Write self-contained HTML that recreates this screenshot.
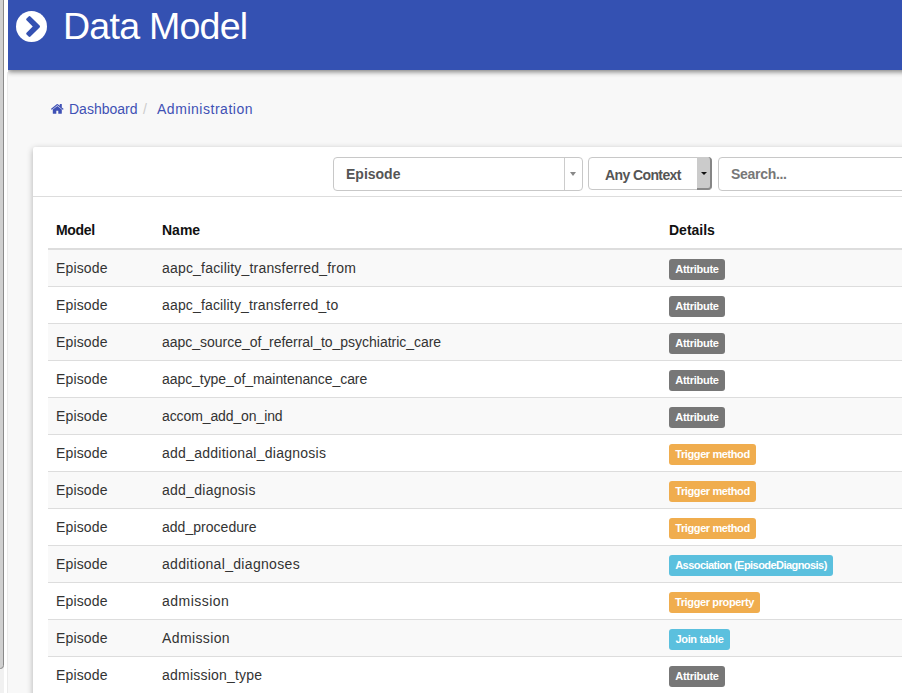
<!DOCTYPE html>
<html><head><meta charset="utf-8">
<style>
*{box-sizing:border-box;margin:0;padding:0}
html,body{width:902px;height:693px;overflow:hidden}
body{background:#f8f8f8;font-family:"Liberation Sans",sans-serif;font-size:14px;color:#333;position:relative}
.sb-thumb{position:absolute;left:-3px;top:-10px;width:7px;height:679px;background:#d0d0d0;border:1px solid #8a8a8a;border-radius:4px}
.sb-track{position:absolute;left:0;top:0;width:4px;height:693px;background:#f1f1f1}
.sb-white{position:absolute;left:4px;top:0;width:4px;height:693px;background:#fff;z-index:5}
.sb-line{position:absolute;left:7px;top:72px;width:1px;height:621px;background:#ebebeb;z-index:6}
.hdr{position:absolute;left:8px;top:0;width:1000px;height:70px;background:#3451b2;box-shadow:0 2px 5px rgba(0,0,0,.48)}
.hdr .circ{position:absolute;left:8px;top:10.7px}
.hdr h1{position:absolute;left:55px;top:4px;font-weight:normal;color:#fff;font-size:37.6px;line-height:44px;letter-spacing:-.78px;white-space:nowrap}
.home{position:absolute;left:51.3px;top:104.2px}
.bc{position:absolute;top:99px;font-size:14px;line-height:20px;color:#3f51b5;white-space:nowrap}
.b1{left:69px}.b2{left:143px;color:#ccc}.b3{left:157px;letter-spacing:.53px}
.panel{position:absolute;left:33px;top:147px;width:900px;height:600px;background:#fff;border-radius:2px;box-shadow:0 2px 6px rgba(0,0,0,.3)}
.ph{position:absolute;left:0;top:0;width:100%;height:50px;border-bottom:1px solid #ddd}
.sel{position:absolute;left:300px;top:10px;width:250px;height:34px;border:1px solid #c8c8c8;border-radius:4px;background:#fff}
.sel .t{position:absolute;left:12px;top:7px;font-weight:bold;color:#555;line-height:18px}
.sel .dv{position:absolute;left:230px;top:0;width:1px;height:32px;background:#ccc}
.sel .ar{position:absolute;left:235.5px;top:13.5px;width:0;height:0;border-left:3px solid transparent;border-right:3px solid transparent;border-top:4.5px solid #888}
.ctx{position:absolute;left:555px;top:10px;width:124px;height:33px;border:1px solid #c8c8c8;border-radius:4px;background:#fff}
.ctx .t{position:absolute;left:16px;top:8px;font-weight:bold;color:#555;line-height:18px;letter-spacing:-.6px}
.ctx .g{position:absolute;right:-1px;top:-1px;width:15px;height:33px;background:#cbcbcb;border-right:2px solid #858585;border-bottom:2px solid #8a8a8a;border-radius:0 4px 4px 0}
.ctx .g:after{content:"";position:absolute;left:3.5px;top:14.5px;border-left:3px solid transparent;border-right:3px solid transparent;border-top:3.5px solid #111}
.srch{position:absolute;left:685px;top:10px;width:300px;height:34px;border:1px solid #c8c8c8;border-radius:4px;background:#fff}
.srch .t{position:absolute;left:12px;top:7px;color:#777;font-weight:bold;line-height:18px;letter-spacing:-.3px}
table{position:absolute;left:15px;top:65px;width:900px;border-collapse:collapse}
th,td{padding:8px;line-height:20px;height:36px;text-align:left;vertical-align:top;white-space:nowrap}
th{font-weight:bold;color:#111;border-bottom:2px solid #ddd}
td{border-top:1px solid #ddd}
tr.o td{background:#f9f9f9}
th.c1,td.c1{width:106px}
td.c1{letter-spacing:.15px}
th.c2,td.c2{width:507px}
.lb{display:inline-block;vertical-align:top;height:21px;padding:0;text-align:center;font-size:11px;font-weight:bold;line-height:21px;color:#fff;border-radius:3px;margin-top:1px;margin-bottom:-2px}
.df{background:#777}.wn{background:#f0ad4e}.in{background:#5bc0de}
.at{width:56px;letter-spacing:-.27px}.tm{width:87px;letter-spacing:-.4px}.as{width:164px;letter-spacing:-.55px}.tp{width:91px;letter-spacing:-.37px}.jt{width:61px;letter-spacing:-.33px}
</style></head><body>
<div class="sb-track"></div>
<div class="sb-thumb"></div>
<div class="hdr">
  <svg class="circ" width="31" height="31" viewBox="0 128 1536 1536"><circle cx="768" cy="896" r="768" fill="#fff"/><path transform="translate(-130,0)" d="M845 1395l454-454q19-19 19-45t-19-45l-454-454q-19-19-45-19t-45 19l-102 102q-19 19-19 45t19 45l307 307-307 307q-19 19-19 45t19 45l102 102q19 19 45 19t45-19z" fill="#3451b2"/></svg>
  <h1>Data Model</h1>
</div>
<svg class="home" width="12.6" height="9.8" viewBox="26 -195 1612 1283" preserveAspectRatio="none"><path fill="#3f51b5" d="M1408 544v480q0 26-19 45t-45 19h-384v-384h-256v384h-384q-26 0-45-19t-19-45v-480q0-1 .5-3t.5-3l575-474 575 474q1 2 1 6zm223-69l-62 74q-8 9-21 11h-3q-13 0-21-7l-692-577-692 577q-12 8-24 7-13-2-21-11l-62-74q-8-10-7-23.5t11-21.5l719-599q32-26 76-26t76 26l244 204v-195q0-14 9-23t23-9h192q14 0 23 9t9 23v408l219 182q10 8 11 21.5t-7 23.5z"/></svg><div class="bc b1">Dashboard</div><div class="bc b2">/</div><div class="bc b3">Administration</div>
<div class="panel">
  <div class="ph">
    <div class="sel"><span class="t">Episode</span><div class="dv"></div><div class="ar"></div></div>
    <div class="ctx"><span class="t">Any Context</span><div class="g"></div></div>
    <div class="srch"><span class="t">Search...</span></div>
  </div>
  <table>
    <thead><tr><th class="c1"><span style="letter-spacing:-.3px">Model</span></th><th class="c2">Name</th><th>Details</th></tr></thead>
    <tbody>
      <tr class="o"><td class="c1">Episode</td><td class="c2" style="letter-spacing:0.190px">aapc_facility_transferred_from</td><td><span class="lb df at">Attribute</span></td></tr>
      <tr><td class="c1">Episode</td><td class="c2" style="letter-spacing:0.155px">aapc_facility_transferred_to</td><td><span class="lb df at">Attribute</span></td></tr>
      <tr class="o"><td class="c1">Episode</td><td class="c2" style="letter-spacing:-0.024px">aapc_source_of_referral_to_psychiatric_care</td><td><span class="lb df at">Attribute</span></td></tr>
      <tr><td class="c1">Episode</td><td class="c2" style="letter-spacing:-0.064px">aapc_type_of_maintenance_care</td><td><span class="lb df at">Attribute</span></td></tr>
      <tr class="o"><td class="c1">Episode</td><td class="c2" style="letter-spacing:-0.107px">accom_add_on_ind</td><td><span class="lb df at">Attribute</span></td></tr>
      <tr><td class="c1">Episode</td><td class="c2" style="letter-spacing:0.257px">add_additional_diagnosis</td><td><span class="lb wn tm">Trigger method</span></td></tr>
      <tr class="o"><td class="c1">Episode</td><td class="c2" style="letter-spacing:0.267px">add_diagnosis</td><td><span class="lb wn tm">Trigger method</span></td></tr>
      <tr><td class="c1">Episode</td><td class="c2" style="letter-spacing:0.025px">add_procedure</td><td><span class="lb wn tm">Trigger method</span></td></tr>
      <tr class="o"><td class="c1">Episode</td><td class="c2" style="letter-spacing:0.320px">additional_diagnoses</td><td><span class="lb in as">Association (EpisodeDiagnosis)</span></td></tr>
      <tr><td class="c1">Episode</td><td class="c2" style="letter-spacing:0.470px">admission</td><td><span class="lb wn tp">Trigger property</span></td></tr>
      <tr class="o"><td class="c1">Episode</td><td class="c2" style="letter-spacing:0.380px">Admission</td><td><span class="lb in jt">Join table</span></td></tr>
      <tr><td class="c1">Episode</td><td class="c2" style="letter-spacing:0.220px">admission_type</td><td><span class="lb df at">Attribute</span></td></tr>
    </tbody>
  </table>
</div>
<div class="sb-white"></div>
<div class="sb-line"></div>
</body></html>
